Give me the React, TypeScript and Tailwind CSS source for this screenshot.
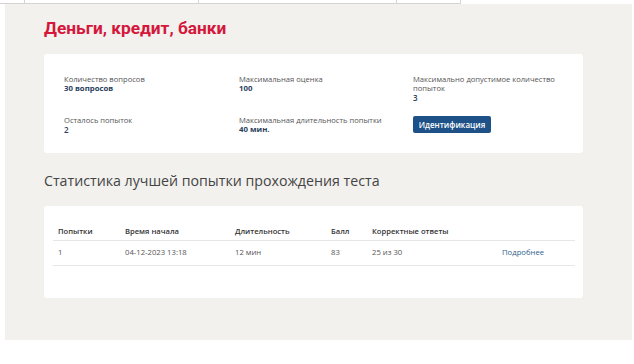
import React from "react";

const info = [
  { label: "Количество вопросов", value: "30 вопросов" },
  { label: "Максимальная оценка", value: "100" },
  { label: "Максимально допустимое количество попыток", value: "3", plain: true },
  { label: "Осталось попыток", value: "2", plain: true },
  { label: "Максимальная длительность попытки", value: "40 мин." },
];

const cols = [
  { title: "Попытки", w: "w-[67px]" },
  { title: "Время начала", w: "w-[110px]" },
  { title: "Длительность", w: "w-[96px]" },
  { title: "Балл", w: "w-[41px]" },
  { title: "Корректные ответы", w: "w-[130px]" },
];

const row = ["1", "04-12-2023 13:18", "12 мин", "83", "25 из 30"];

function Info({ label, value, plain }: { label: string; value: string; plain?: boolean }) {
  return (
    <div className="w-[165px]">
      <div className="text-[7.6px] leading-[9px] text-[#555]">{label}</div>
      <div
        className={
          plain
            ? "text-[8px] leading-[9px] font-semibold text-[#2a3f5e]"
            : "text-[7.8px] leading-[9px] font-bold text-[#2a3f5e]"
        }
      >
        {value}
      </div>
    </div>
  );
}

export default function App() {
  return (
    <div className="w-[634px] h-[364px] bg-white font-['Open_Sans',sans-serif] overflow-hidden">
      {/* remnants of the table above */}
      <div className="flex h-[4px] w-[461px] border-b border-[#d4d4d4]">
        <div className="w-[25px] border-r border-[#d4d4d4]" />
        <div className="w-[174px] border-r border-[#d4d4d4]" />
        <div className="w-[198px] border-r border-[#d4d4d4]" />
        <div className="w-[64px] border-r border-[#d4d4d4]" />
      </div>

      <div className="ml-[5px] w-[627px] h-[336px] bg-[#f2f1ee] pl-[39px] pr-[49px] pt-[13px]">
        <h1 className="font-['Roboto',sans-serif] text-[17.3px] leading-[22px] font-bold text-[#d4173b]">
          Деньги, кредит, банки
        </h1>

        <div className="mt-[15px] h-[99px] bg-white rounded-[3px] pl-[20px] pt-[21px]">
          <div className="flex">
            <div className="w-[175px]"><Info {...info[0]} /></div>
            <div className="w-[174px]"><Info {...info[1]} /></div>
            <Info {...info[2]} />
          </div>
          <div className="flex mt-[14px]">
            <div className="w-[175px]"><Info {...info[3]} /></div>
            <div className="w-[174px]"><Info {...info[4]} /></div>
            <button className="h-[17px] w-[78px] bg-[#1e5187] rounded-[2px] text-white text-[8px] font-semibold leading-[17px]">
              Идентификация
            </button>
          </div>
        </div>

        <h2 className="mt-[17px] text-[14.2px] leading-[22px] text-[#444]">
          Статистика лучшей попытки прохождения теста
        </h2>

        <div className="mt-[14px] h-[92px] bg-white rounded-[3px] pl-[9px] pr-[8px] pt-[18px]">
          <div className="flex items-center h-[17px] border-b border-[#e6e6e6] pl-[5px] text-[7.6px] font-semibold text-[#333]">
            {cols.map((c) => (
              <div key={c.title} className={c.w}>{c.title}</div>
            ))}
          </div>
          <div className="flex items-center h-[25px] border-b border-[#e6e6e6] pl-[5px] text-[7.7px] text-[#555]">
            {row.map((v, i) => (
              <div key={i} className={cols[i].w}>{v}</div>
            ))}
            <a className="text-[#2f5f8e]">Подробнее</a>
          </div>
        </div>
      </div>
    </div>
  );
}
